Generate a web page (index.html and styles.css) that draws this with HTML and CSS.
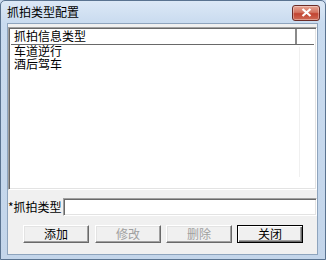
FILE: index.html
```html
<!DOCTYPE html>
<html>
<head>
<meta charset="utf-8">
<link rel="stylesheet" href="styles.css">
</head>
<body>
<div class="window">
  <div class="titlebar">
    <span class="title">抓拍类型配置</span>
    <button class="close" aria-label="close">
      <svg width="11" height="9" viewBox="0 0 11 9"><path d="M1.5 1 L9.5 8 M9.5 1 L1.5 8" stroke="#fff" stroke-width="2.2" fill="none"/></svg>
    </button>
  </div>
  <div class="client">
    <div class="listview">
      <div class="header">
        <div class="col1">抓拍信息类型</div>
        <div class="col2"></div>
      </div>
      <div class="rows">
        <div class="row">车道逆行</div>
        <div class="row">酒后驾车</div>
      </div>
      <div class="gridline"></div>
    </div>
    <div class="field">
      <label class="label">*抓拍类型</label>
      <div class="input"></div>
    </div>
    <div class="buttons">
      <button class="btn b1">添加</button>
      <button class="btn b2 disabled">修改</button>
      <button class="btn b3 disabled">删除</button>
      <button class="btn b4 default">关闭</button>
    </div>
  </div>
</div>
</body>
</html>
```
FILE: styles.css
```css
html, body {
  margin: 0;
  padding: 0;
  background: #c9d9ee;
}
body {
  font-family: "Noto Sans CJK SC", "Noto Sans", sans-serif;
  font-size: 12px;
  color: #000;
}
.window {
  width: 326px;
  height: 260px;
  box-sizing: border-box;
  border: 1px solid #5a7390;
  border-radius: 5px 5px 0 0;
  background: linear-gradient(#dce8f6 0, #c9dbef 22px, #c3d5ea 100%);
  display: flex;
  flex-direction: column;
  padding: 0 7px 4px 6px;
}
.titlebar {
  height: 22px;
  display: flex;
  align-items: center;
  justify-content: space-between;
}
.title {
  font-size: 12px;
  line-height: 14px;
  margin-top: 0;
  color: #000;
}
.close {
  width: 28px;
  height: 16px;
  margin-right: -2px;
  margin-top: 1px;
  padding: 0;
  border: 1px solid #6b2b26;
  border-radius: 3px;
  background: linear-gradient(#e8a493 0, #d47562 45%, #c24431 55%, #cf6a55 100%);
  box-shadow: inset 0 0 0 1px rgba(255,255,255,0.35);
  display: flex;
  align-items: center;
  justify-content: center;
}
.client {
  flex: 1;
  background: #f0f0f0;
  border: 1px solid #8ea4bd;
  display: flex;
  flex-direction: column;
  padding: 3px 0 0 0;
}
.listview {
  height: 163px;
  box-sizing: border-box;
  border-top: 1px solid #a0a0a0;
  border-left: 1px solid #a0a0a0;
  border-right: 1px solid #fff;
  border-bottom: 1px solid #fff;
  box-shadow: inset 1px 1px 0 #696969, inset -1px -1px 0 #e3e3e3;
  background: #fff;
  position: relative;
  padding: 1px 2px 0 2px;
}
.header {
  display: flex;
  height: 15px;
  border-bottom: 1px solid #696969;
  background: #fff;
}
.col1 {
  width: 286px;
  box-sizing: border-box;
  padding-left: 3px;
  line-height: 14px;
  border-right: 2px solid #8a8a8a;
  box-shadow: inset -1px 0 0 #fff;
}
.col2 {
  flex: 1;
}
.rows {
  padding-left: 3px;
}
.row {
  height: 13px;
  line-height: 12px;
}
.gridline {
  position: absolute;
  left: 290px;
  top: 19px;
  bottom: 12px;
  width: 1px;
  background: #f0f0f0;
}
.field {
  display: flex;
  align-items: center;
  margin-top: 8px;
  height: 18px;
}
.label {
  width: 55px;
  line-height: 14px;
}
.input {
  flex: 1;
  height: 18px;
  box-sizing: border-box;
  border-top: 1px solid #a0a0a0;
  border-left: 1px solid #a0a0a0;
  border-right: 1px solid #fff;
  border-bottom: 1px solid #fff;
  box-shadow: inset 1px 1px 0 #696969, inset -1px -1px 0 #e3e3e3;
  background: #fff;
}
.buttons {
  display: flex;
  margin-top: 9px;
  padding-left: 15px;
  gap: 5px;
}
.btn {
  font-family: "Noto Sans CJK SC", "Noto Sans", sans-serif;
  font-size: 12px;
  width: 66px;
  height: 18px;
  padding: 0;
  box-sizing: border-box;
  background: #f0f0f0;
  border-top: 1px solid #fff;
  border-left: 1px solid #fff;
  border-right: 1px solid #696969;
  border-bottom: 1px solid #696969;
  box-shadow: inset -1px -1px 0 #a0a0a0, inset 1px 1px 0 #e3e3e3;
  color: #000;
  line-height: 14px;
}
.b2 { margin-left: 1px; }
.disabled {
  color: #a0a0a0;
}
.default {
  border: 1px solid #000;
  box-shadow: inset 1px 1px 0 #fff, inset -1px -1px 0 #696969, inset -2px -2px 0 #a0a0a0;
}
```
